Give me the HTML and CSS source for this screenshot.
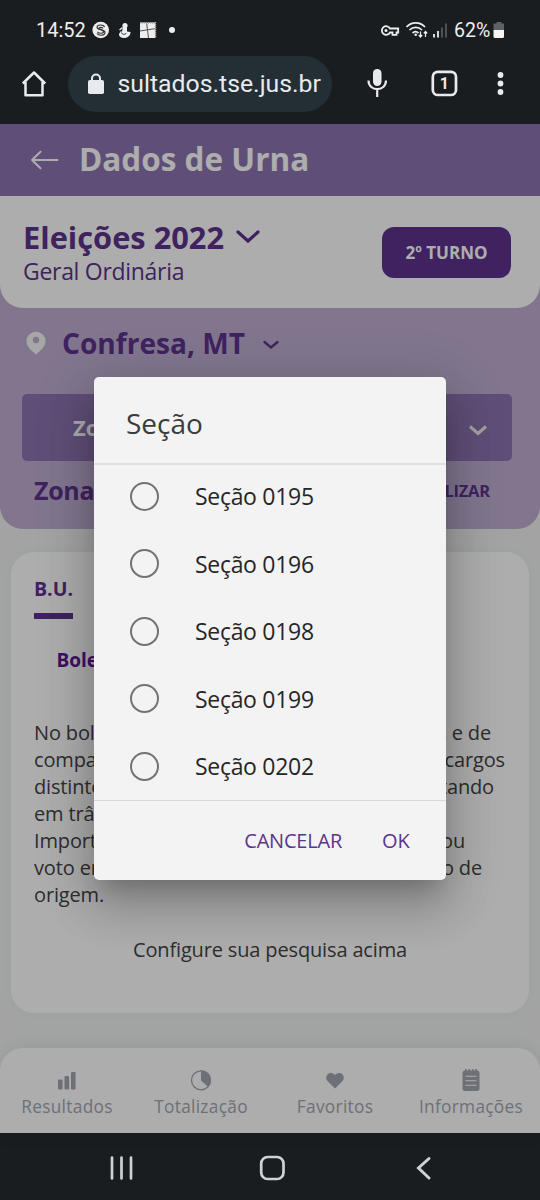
FILE: index.html
```html
<!DOCTYPE html>
<html lang="pt-BR">
<head>
    <meta charset="UTF-8">
    <title>Dados de Urna</title>
    <link rel="stylesheet" href="styles.css">
</head>
<body>
    <div class="phone">
        <div class="status-bar">
            <span class="time">14:52</span>
            <svg class="status-left" width="80" height="20" viewBox="92 20 80 20">
                <circle cx="100.700" cy="30" r="8.300" fill="#eee"/>
                <path d="M104.500 27c-1-2.800-7.500-2.600-7.500.3 0 3.200 6.500 1.700 6.500 4.400 0 2-4.500 2.200-6 .2M103 28.300c-1-1.300-4-1.300-4 0 0 1.700 6 1 6 4.200 0 3.300-6.500 3.500-8 1" fill="none" stroke="#333" stroke-width="1.100"/>
                <circle cx="125" cy="25.500" r="2.600" fill="#eee"/>
                <path d="M123 27h4v4.500l3.500.5c0 3.500-2.500 6-6.500 6-3 0-5-1.300-5-3.500 0-1.500 1-2.500 3-3z" fill="#eee"/>
                <path d="M122.500 27.500l-3 2.500M121 31.500c-.5 2 1.500 3.500 4 2.500" fill="none" stroke="#eee" stroke-width="1.300"/>
                <path d="M121.500 32.500c.5 2.200 3.500 2.500 5 .5" fill="none" stroke="#1a1d1f" stroke-width=".9"/>
                <path d="M140 22.500h15.500v15.500H140z" fill="#eee"/>
                <path d="M146.500 22l2 16M140 31l16-2.500" stroke="#555" stroke-width="1"/>
                <path d="M140 23h16M155.500 22v16" stroke="#aaa" stroke-width="1.500" stroke-dasharray="1 1"/>
                <circle cx="172" cy="30" r="3" fill="#eee"/>
            </svg>
            <svg class="status-right" width="68" height="20" viewBox="380 20 68 20">
                <path d="M390 28.500a4.300 4.300 0 1 0 0 4h2.500v2.300h4v-2.300h1.700v-4z" fill="none" stroke="#eee" stroke-width="1.800"/>
                <circle cx="386" cy="30.500" r="1.500" fill="#eee"/>
                <path d="M406.500 27c5-5.500 13.500-5.500 18.500 0M409.500 30c3.500-3.500 9-3.500 12.500 0M412.500 33c2-1.800 4-1.800 6 0" fill="none" stroke="#eee" stroke-width="1.700"/>
                <path d="M420.500 31.500v5M418.800 35l1.700 2 1.700-2M425.500 37v-5M423.800 33.500l1.700-2 1.700 2" fill="none" stroke="#eee" stroke-width="1.200"/>
                <circle cx="415.700" cy="34.800" r="1.300" fill="#eee"/>
                <path d="M434 34v3.500M438 31v6.500" stroke="#eee" stroke-width="1.800"/>
                <path d="M442 27.500v10M446 23.500v14" stroke="#5c5f61" stroke-width="1.600"/>
            </svg>
            <span class="battery-text">62%</span>
            <svg class="battery" width="12" height="17" viewBox="0 0 12 17">
                <path d="M3.500 0h5v1.500H11V8H.5V1.500h3z" fill="#5f6264"/>
                <path d="M.5 8H11v6.500q0 1.500-1.500 1.500H2Q.5 16 .5 14.500z" fill="#f4f4f4"/>
            </svg>
        </div>

        <div class="browser-bar">
            <svg class="home" width="28" height="28" viewBox="20 70 28 28">
                <path d="M22.800 83.500L34 72.500l11.200 11M25.500 82v13.200h17V82" fill="none" stroke="#e8eaed" stroke-width="2.500" stroke-linejoin="round"/>
            </svg>
            <div class="url">
                <svg width="16" height="22" viewBox="88 72 16 22">
                    <rect x="88" y="79" width="16" height="14" rx="1.800" fill="#e8eaed"/>
                    <path d="M92 80v-2.500a4 4 0 0 1 8 0V80" fill="none" stroke="#e8eaed" stroke-width="2"/>
                </svg>
                <span>sultados.tse.jus.br</span>
            </div>
            <svg class="tools" width="140" height="30" viewBox="366 68 140 30">
                <rect x="373" y="69" width="8.500" height="17" rx="4.200" fill="#e8eaed"/>
                <path d="M368.500 80.500c0 11.500 17.500 11.500 17.500 0M377.200 89v8" fill="none" stroke="#e8eaed" stroke-width="2.200"/>
                <rect x="432.800" y="71.800" width="23.200" height="23.200" rx="5" fill="none" stroke="#e8eaed" stroke-width="2.700"/>
                <text x="444.400" y="89.300" class="tab-count">1</text>
                <circle cx="500.500" cy="75" r="2.900" fill="#e8eaed"/>
                <circle cx="500.500" cy="83.500" r="2.900" fill="#e8eaed"/>
                <circle cx="500.500" cy="92" r="2.900" fill="#e8eaed"/>
            </svg>
        </div>

        <div class="app">
            <header class="app-header">
                <svg width="30" height="20" viewBox="0 0 30 20">
                    <path d="M27.500 10H2M10.500 1.800L2 10l8.500 8.200" fill="none" stroke="#fff" stroke-width="2" stroke-linecap="round" stroke-linejoin="round"/>
                </svg>
                <h1>Dados de Urna</h1>
            </header>

            <div class="filters">
                <div class="election">
                    <div>
                        <div class="election-name">
                            <span>Eleições 2022</span>
                            <svg width="24" height="14" viewBox="0 0 24 14"><path d="M2 2l10 9 10-9" fill="none" stroke="#5d338c" stroke-width="3.200" stroke-linecap="round"/></svg>
                        </div>
                        <div class="election-type">Geral Ordinária</div>
                    </div>
                    <button class="round">2º TURNO</button>
                </div>
                <div class="place">
                    <svg width="20" height="24" viewBox="0 0 20 24"><path fill-rule="evenodd" d="M10 .8a9.500 9.500 0 0 0-9.500 9.500C.5 16 6 20 10 23.500 14 20 19.500 16 19.500 10.300A9.500 9.500 0 0 0 10 .8zm0 5a3.200 3.200 0 1 1 0 6.400 3.200 3.200 0 0 1 0-6.400z" fill="#f6f6f6"/></svg>
                    <span>Confresa, MT</span>
                    <svg class="place-arrow" width="16" height="10" viewBox="0 0 16 10"><path d="M1.500 2L8 7.500 14.500 2" fill="none" stroke="#5d338c" stroke-width="2.400" stroke-linecap="round"/></svg>
                </div>
                <div class="zone-select">
                    <span>Zona</span>
                    <svg width="18" height="11" viewBox="0 0 18 11"><path d="M1 1.500l8 7 8-7" fill="none" stroke="#eee" stroke-width="3"/></svg>
                </div>
                <div class="zone-line">
                    <span class="zone-name">Zona</span>
                    <span class="zone-find">LOCALIZAR</span>
                </div>
            </div>

            <main class="card">
                <span class="tab">B.U.</span>
                <h2>Boletim</h2>
                <div class="lines">
                    <div><span>No boletim</span><span>aptos e de</span></div>
                    <div><span>comparecimento</span><span>cargos</span></div>
                    <div><span>distintos</span><span>votando</span></div>
                    <div><span>em trânsito.</span></div>
                    <div><span>Importante:</span><span>ou</span></div>
                    <div><span>voto em</span><span>ao de</span></div>
                    <div><span>origem.</span></div>
                </div>
                <p class="hint">Configure sua pesquisa acima</p>
            </main>

            <nav class="tabs">
                <a><svg width="22" height="24" viewBox="0 0 22 24"><rect x="2" y="12.500" width="4.600" height="10" rx="1.200"/><rect x="8.500" y="9" width="4.600" height="13.500" rx="1.200"/><rect x="15" y="5" width="4.600" height="17.500" rx="1.200"/></svg><span>Resultados</span></a>
                <a><svg width="22" height="24" viewBox="0 0 22 24"><circle cx="11" cy="13.300" r="9.500" fill="none" stroke="#a3a6b0" stroke-width="1.300"/><path d="M11 3.500a9.800 9.800 0 0 1 7.200 16.500L11 13.500z"/></svg><span>Totalização</span></a>
                <a><svg width="22" height="24" viewBox="0 0 22 24"><path d="M11 21.500L3.500 14C-.5 9.500 5.500 2.500 11 8c5.500-5.500 11.500 1.500 7.500 6z"/></svg><span>Favoritos</span></a>
                <a><svg width="22" height="24" viewBox="0 0 22 24"><rect x="2.500" y="3.500" width="17" height="20.500" rx="2.500"/><path d="M5.800 2v2M9.200 2v2M12.700 2v2M16.200 2v2" stroke="#a3a6b0" stroke-width="1.700"/><path d="M5.500 9.200h11M5.500 13.700h11M5.500 18.300h11" stroke="#fff" stroke-width="1.100"/></svg><span>Informações</span></a>
            </nav>

            <div class="backdrop">
                <div class="dialog">
                    <h3>Seção</h3>
                    <div class="options">
                        <label><i></i>Seção 0195</label>
                        <label><i></i>Seção 0196</label>
                        <label><i></i>Seção 0198</label>
                        <label><i></i>Seção 0199</label>
                        <label><i></i>Seção 0202</label>
                    </div>
                    <div class="actions"><span>CANCELAR</span><span>OK</span></div>
                </div>
            </div>
        </div>

        <div class="system-nav">
            <svg width="540" height="67" viewBox="0 1133 540 67">
                <g fill="none" stroke="#d0d1d2" stroke-width="2.700" stroke-linecap="round">
                    <path d="M112 1157.500v21M121.500 1157.500v21M131 1157.500v21"/>
                    <rect x="261.200" y="1157" width="22.300" height="22" rx="6.500"/>
                    <path d="M429 1158.500l-10.500 9.500 10.500 10" stroke-width="3"/>
                </g>
            </svg>
        </div>
    </div>
</body>
</html>
```
FILE: styles.css
```css
* {
    box-sizing: border-box;
}

body {
    margin: 0;
    font-family: 'Open Sans', sans-serif;
    background: #1a1d1f;
}

h1, h2, h3, p {
    margin: 0;
}

svg {
    display: block;
    flex-shrink: 0;
}

span {
    white-space: nowrap;
}

.phone {
    width: 540px;
    height: 1200px;
    overflow: hidden;
}

.status-bar {
    height: 55.500px;
    padding: 5px 0 0 36px;
    display: flex;
    align-items: center;
    font-family: Roboto, sans-serif;
    font-size: 20px;
    color: #eee;
}

.time {
    width: 56px;
}

.status-left {
    overflow: visible;
}

.status-right {
    margin-left: 208px;
}

.battery-text {
    width: 45px;
    padding-left: 6px;
    font-size: 19.500px;
}

.battery {
    margin-top: 1px;
}

.browser-bar {
    height: 68px;
    padding-left: 20px;
    display: flex;
    align-items: flex-start;
}

.home {
    margin-top: 14px;
}

.url {
    width: 264px;
    height: 56px;
    margin-left: 20px;
    padding-left: 20px;
    border-radius: 28px;
    background: #232f35;
    display: flex;
    align-items: center;
    font-family: Roboto, sans-serif;
    font-size: 24.800px;
    color: #e8eaed;
}

.url span {
    margin-left: 13.500px;
}

.tools {
    margin: 12.500px 0 0 34px;
}

.tab-count {
    font: bold 16px Roboto, sans-serif;
    fill: #e8eaed;
    text-anchor: middle;
}

.app {
    position: relative;
    height: 1009.500px;
    display: flex;
    flex-direction: column;
    background: #f0f1f1;
}

.app-header {
    height: 72.500px;
    padding-left: 30px;
    display: flex;
    align-items: center;
    background: #8d74b0;
    color: #fff;
}

.app-header h1 {
    margin: -1px 0 0 19px;
    font-size: 31.500px;
    line-height: 40px;
}

.filters {
    height: 333px;
    border-radius: 0 0 23px 23px;
    background: #bfafd2;
    color: #5d338c;
}

.election {
    height: 112px;
    padding: 0 29px 0 23px;
    border-radius: 0 0 23px 23px;
    display: flex;
    align-items: center;
    justify-content: space-between;
    background: #fff;
}

.election-name {
    display: flex;
    align-items: center;
    gap: 12px;
    font-size: 30.800px;
    font-weight: bold;
    line-height: 36px;
}

.election-type {
    padding-top: 2px;
    font-size: 23px;
    line-height: 29px;
    letter-spacing: -0.300px;
}

.round {
    width: 129px;
    height: 51px;
    padding: 0;
    border: 0;
    border-radius: 12px;
    background: #5d338c;
    color: #fff;
    font: bold 17px 'Open Sans', sans-serif;
}

.place {
    height: 70px;
    padding-left: 26px;
    display: flex;
    align-items: center;
    font-size: 28.100px;
    font-weight: bold;
}

.place span {
    margin-left: 16px;
}

.place-arrow {
    margin: 3px 0 0 18px;
}

.zone-select {
    width: 490px;
    height: 67px;
    margin: 16px 0 0 22px;
    padding: 0 25px 0 51px;
    border-radius: 5px;
    display: flex;
    align-items: center;
    justify-content: space-between;
    background: #8d74b0;
    color: #fff;
    font-size: 22px;
    font-weight: bold;
}

.zone-select span {
    margin-top: -2px;
}

.zone-select svg {
    margin-top: 6px;
}

.zone-line {
    height: 58px;
    padding: 0 50px 0 34px;
    display: flex;
    align-items: center;
    justify-content: space-between;
    font-weight: bold;
}

.zone-name {
    font-size: 25px;
    letter-spacing: -0.300px;
}

.zone-find {
    font-size: 16.500px;
    letter-spacing: -0.200px;
}

.card {
    width: 518px;
    height: 461px;
    margin: 23px 11px 0;
    padding: 23px 23px 0;
    border-radius: 23px;
    background: #fff;
    box-shadow: 0 0 20px rgba(0, 0, 0, 0.03);
}

.tab {
    display: inline-block;
    height: 44px;
    border-bottom: 6px solid #5d338c;
    color: #5d338c;
    font-size: 19.500px;
    font-weight: bold;
    line-height: 27px;
}

.card h2 {
    margin: 27px 0 0 22.500px;
    color: #5a1a94;
    font-size: 19px;
    line-height: 28px;
}

.lines {
    margin-top: 45px;
    color: #444;
    font-size: 20px;
    line-height: 27px;
    letter-spacing: -0.150px;
}

.lines div {
    width: 457px;
    display: flex;
    justify-content: space-between;
}

.lines div:nth-child(2) {
    width: 471px;
}

.lines div:nth-child(3) {
    width: 460px;
}

.lines div:nth-child(5) {
    width: 431px;
}

.lines div:nth-child(6) {
    width: 448px;
}

.hint {
    margin-top: 28px;
    text-align: center;
    color: #444;
    font-size: 20px;
    line-height: 27px;
    letter-spacing: -0.150px;
}

.tabs {
    height: 85px;
    margin-top: 35px;
    padding-top: 19px;
    border-radius: 23px 23px 0 0;
    display: grid;
    grid-template-columns: 134px 134px 134px 138px;
    background: #fff;
    box-shadow: 0 0 20px rgba(0, 0, 0, 0.08);
    color: #a3a6b0;
    fill: #a3a6b0;
}

.tabs a {
    display: flex;
    flex-direction: column;
    align-items: center;
    font-size: 17.300px;
    line-height: 24px;
    letter-spacing: 0.300px;
}

.tabs span {
    margin-top: 4px;
}

.backdrop {
    position: absolute;
    inset: 0;
    padding: 253px 0 0 94px;
    background: rgba(0, 0, 0, 0.32);
}

.dialog {
    width: 351.500px;
    height: 503.500px;
    border-radius: 5px;
    background: #f3f3f3;
    box-shadow: 0 16px 22px -10px rgba(0, 0, 0, 0.2), 0 28px 44px 4px rgba(0, 0, 0, 0.14), 0 10px 54px 10px rgba(0, 0, 0, 0.12);
}

.dialog h3 {
    height: 86px;
    padding: 25px 32px 0;
    color: #3c3c3c;
    font-size: 28px;
    font-weight: normal;
    line-height: 42px;
}

.options {
    height: 338.500px;
    border-top: 2px solid #e0e0e0;
    border-bottom: 1px solid #d8d8d8;
}

.options label {
    height: 67.500px;
    padding: 0 0 4px 36px;
    display: flex;
    align-items: center;
    color: #262626;
    font-size: 23px;
    letter-spacing: -0.300px;
}

.options i {
    width: 29px;
    height: 29px;
    margin-right: 36px;
    border: 2.500px solid #737373;
    border-radius: 50%;
}

.actions {
    height: 79px;
    padding-right: 36px;
    display: flex;
    align-items: center;
    justify-content: flex-end;
    gap: 40px;
    color: #5d338c;
    font-size: 20px;
    letter-spacing: -0.200px;
}

.system-nav {
    height: 67px;
    background: #1a1d1f;
}
```
